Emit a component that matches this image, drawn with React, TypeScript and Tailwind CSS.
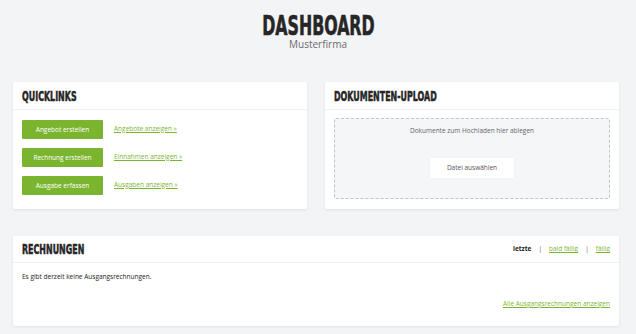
import React from "react";

const headFont = { fontFamily: '"DejaVu Sans Condensed", "DejaVu Sans", sans-serif' };

const quicklinks = [
  { button: "Angebot erstellen", link: "Angebote anzeigen »" },
  { button: "Rechnung erstellen", link: "Einnahmen anzeigen »" },
  { button: "Ausgabe erfassen", link: "Ausgaben anzeigen »" },
];

const CardTitle: React.FC<{ children: React.ReactNode }> = ({ children }) => (
  <h2
    style={headFont}
    className="origin-left scale-x-[0.63] whitespace-nowrap text-[14px] font-bold leading-none text-[#262626] [-webkit-text-stroke:0.5px_#262626]"
  >
    {children}
  </h2>
);

const App: React.FC = () => {
  return (
    <div
      className="h-[334px] w-[636px] overflow-hidden bg-[#f3f4f6] text-[#333]"
      style={{ fontFamily: '"Open Sans", "Liberation Sans", sans-serif' }}
    >
      <header className="flex flex-col items-center pt-[12px]">
        <h1
          style={headFont}
          className="scale-x-[0.65] text-[27px] font-bold leading-[27px] text-[#262626] [-webkit-text-stroke:0.6px_#262626]"
        >
          DASHBOARD
        </h1>
        <p className="text-[10px] leading-[10px] text-[#6b6b6b]">Musterfirma</p>
      </header>

      <main className="pl-[13px] pr-[17px] pt-[33px]">
        <div className="grid grid-cols-2 gap-[18px]">
          <section className="h-[127px] rounded-[2px] bg-white shadow-[0_1px_3px_rgba(0,0,0,0.08)]">
            <div className="flex h-[28px] items-center border-b border-[#f0f0f0] px-[9px]">
              <CardTitle>QUICKLINKS</CardTitle>
            </div>
            <div className="flex flex-col gap-[9px] px-[9px] pt-[10px]">
              {quicklinks.map((q) => (
                <div key={q.button} className="flex items-center gap-[11px]">
                  <button className="h-[19px] w-[81px] rounded-[1px] bg-[#7bb52f] text-[6.5px] text-white">
                    {q.button}
                  </button>
                  <a className="-mt-[2px] text-[6.5px] text-[#7bb52f] underline">{q.link}</a>
                </div>
              ))}
            </div>
          </section>

          <section className="h-[127px] rounded-[2px] bg-white shadow-[0_1px_3px_rgba(0,0,0,0.08)]">
            <div className="flex h-[28px] items-center border-b border-[#f0f0f0] px-[9px]">
              <CardTitle>DOKUMENTEN-UPLOAD</CardTitle>
            </div>
            <div className="px-[9px] pt-[8px]">
              <div className="flex h-[81px] flex-col items-center rounded-[2px] border border-dashed border-[#c4c4c4] bg-[#f5f6f8] pt-[7px]">
                <p className="text-[6.5px] leading-[10px] text-[#666]">
                  Dokumente zum Hochladen hier ablegen
                </p>
                <button className="mt-[22px] h-[20px] w-[84px] rounded-[1px] bg-white text-[6.5px] text-[#555] shadow-[0_0_1px_rgba(0,0,0,0.15)]">
                  Datei auswählen
                </button>
              </div>
            </div>
          </section>
        </div>

        <section className="mt-[27px] h-[90px] rounded-[2px] bg-white shadow-[0_1px_3px_rgba(0,0,0,0.08)]">
          <div className="flex h-[27px] items-center justify-between border-b border-[#f0f0f0] pl-[9px] pr-[9px]">
            <CardTitle>RECHNUNGEN</CardTitle>
            <div className="flex items-center gap-[7px] text-[6.5px]">
              <span className="font-bold text-[#222]">letzte</span>
              <span className="text-[#555]">|</span>
              <a className="text-[#7bb52f] underline">bald fällig</a>
              <span className="text-[#555]">|</span>
              <a className="text-[#7bb52f] underline">fällig</a>
            </div>
          </div>
          <div className="flex flex-col px-[9px] pt-[9px]">
            <p className="text-[6.5px] leading-[10px] text-[#222]">
              Es gibt derzeit keine Ausgangsrechnungen.
            </p>
            <a className="mt-[17px] self-end text-[6.5px] leading-[10px] text-[#7bb52f] underline">
              Alle Ausgangsrechnungen anzeigen
            </a>
          </div>
        </section>
      </main>
    </div>
  );
};

export default App;
